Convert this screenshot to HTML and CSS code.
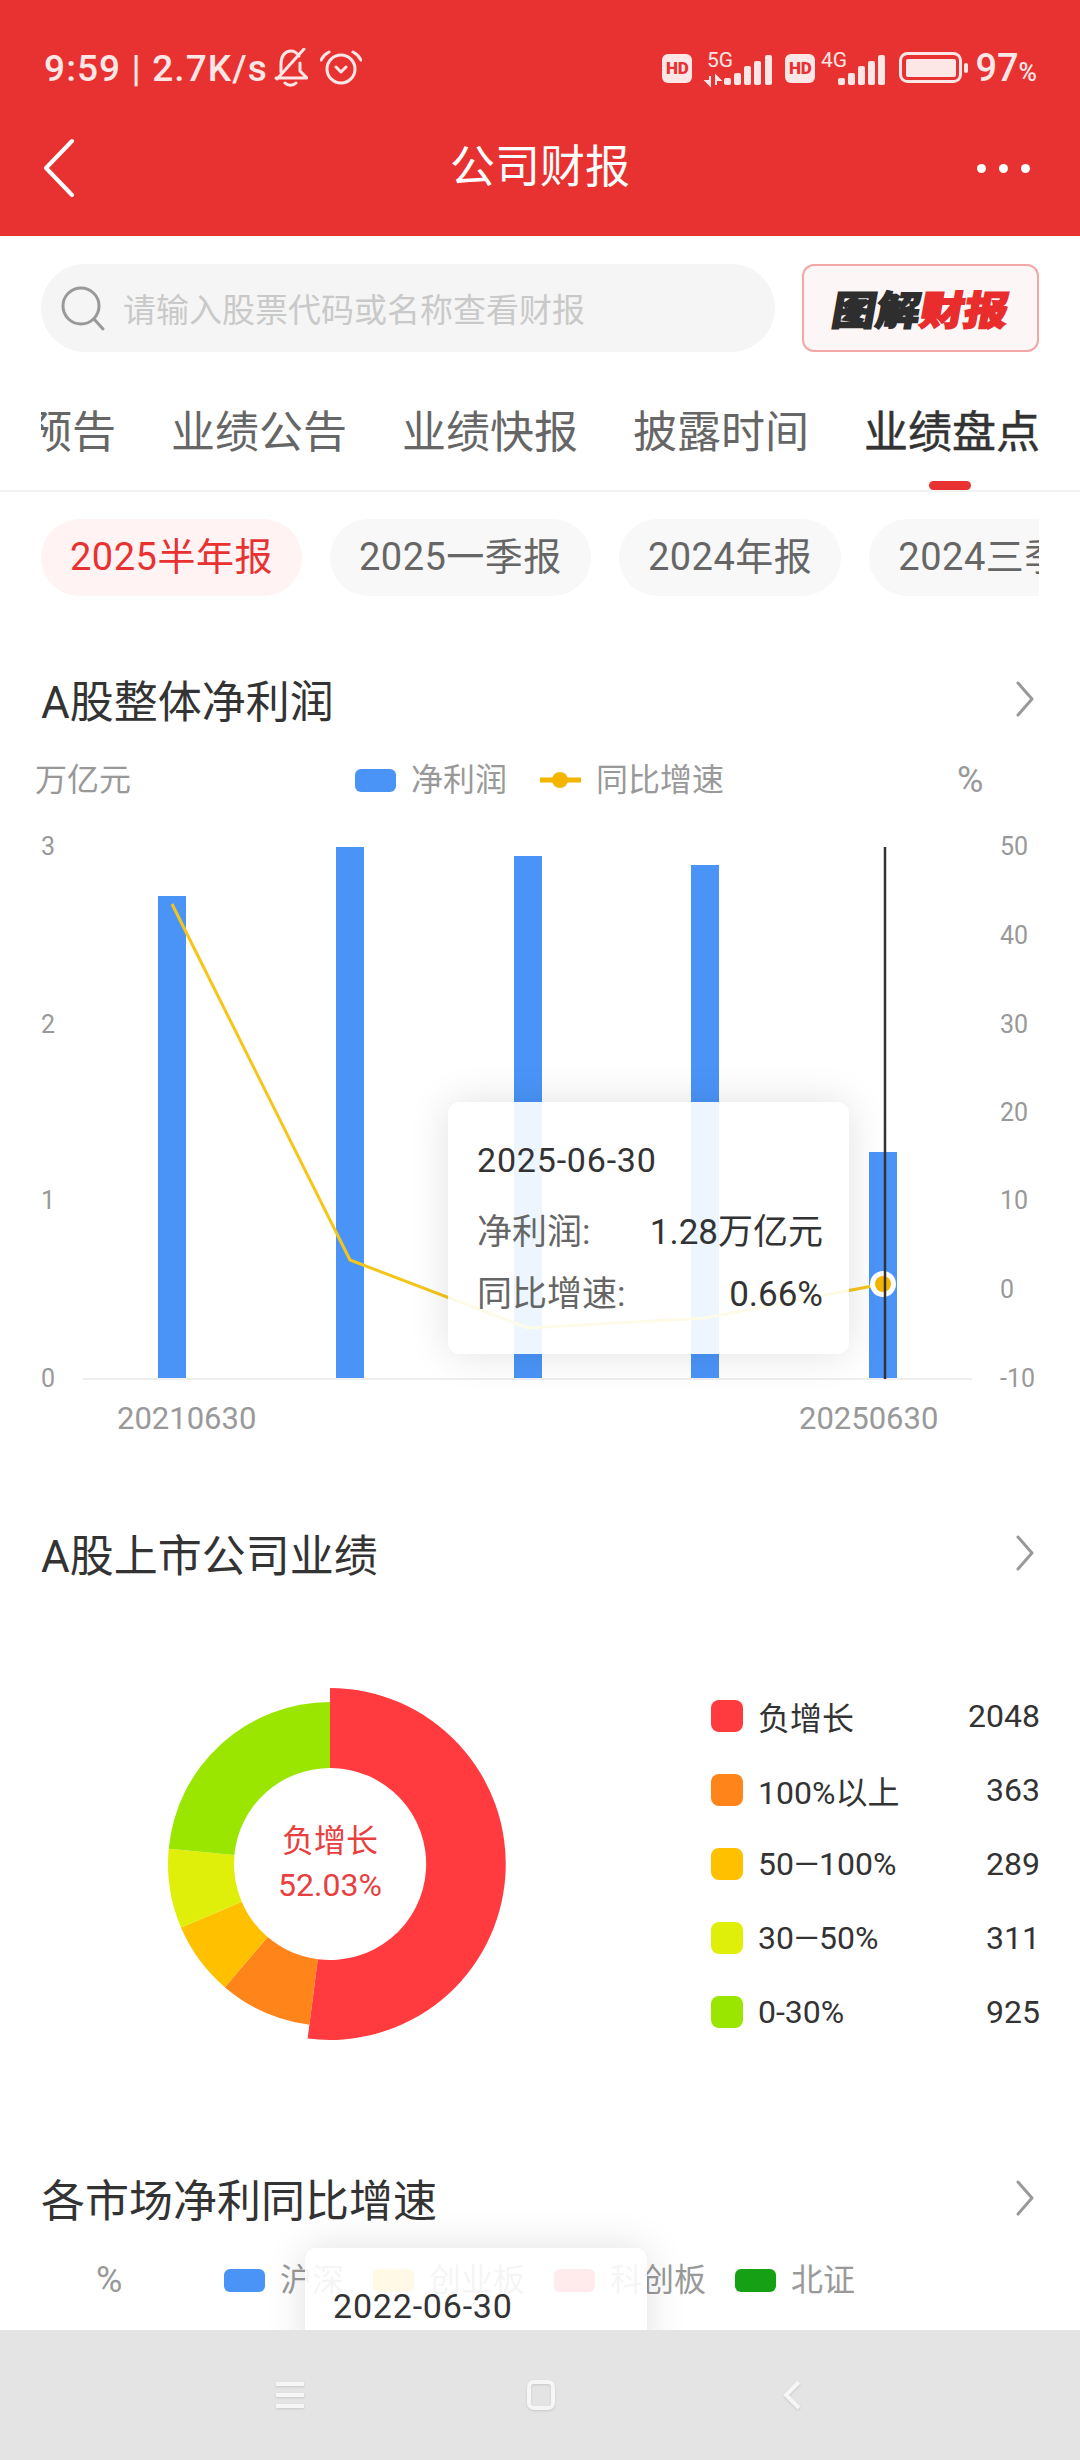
FILE: index.html
```html
<!DOCTYPE html>
<html lang="zh-CN">
<head>
<meta charset="UTF-8">
<meta name="viewport" content="width=device-width, initial-scale=1.0">
<title>公司财报</title>
<link rel="stylesheet" href="styles.css">
</head>
<body>
  <div class="header">
    <div class="status">
      <div class="status-left">
        <span class="clock">9:59 | 2.7K/s</span>
        <svg class="bell" viewBox="0 0 34 40" width="34" height="40">
          <path d="M7 24 V16 C7 8 11 3 17 3 C20 3 23 5 25 8 M26 15 V23 L33 30 H2 M30 1 L3 31 M11 35 C14 38 19 38 22 35"/>
        </svg>
        <svg class="alarm" viewBox="0 0 42 38" width="42" height="38">
          <circle cx="21" cy="20" r="14"/>
          <path d="M16 18 L21 23 L26 18 M1 11 C3 7 5 5 9 3 M33 3 C37 5 39 7 41 11"/>
        </svg>
      </div>
      <div class="status-right">
        <span class="hd">HD</span>
        <svg class="signal" viewBox="0 0 75 38" width="75" height="38">
          <text x="8" y="18">5G</text>
          <path class="arrow" d="M11 27 V35 M7 32 L11 36 L11 32 Z M17 36 V28 M17 27 L21 31 L17 31 Z"/>
          <rect x="25" y="29" width="7" height="7" rx="2"/>
          <rect x="35" y="24" width="7" height="12" rx="2"/>
          <rect x="45" y="17" width="7" height="19" rx="2"/>
          <rect x="55" y="12" width="7" height="24" rx="2"/>
          <rect x="66" y="6" width="7" height="30" rx="2"/>
        </svg>
        <span class="hd">HD</span>
        <svg class="signal signal-four" viewBox="0 0 65 38" width="65" height="38">
          <text x="1" y="18">4G</text>
          <rect x="18" y="29" width="7" height="7" rx="2"/>
          <rect x="28" y="24" width="7" height="12" rx="2"/>
          <rect x="38" y="17" width="7" height="19" rx="2"/>
          <rect x="48" y="12" width="7" height="24" rx="2"/>
          <rect x="58" y="6" width="7" height="30" rx="2"/>
        </svg>
        <svg class="battery" viewBox="0 0 70 32" width="70" height="32">
          <rect class="battery-case" x="1.5" y="1.5" width="60" height="28" rx="7"/>
          <rect x="7" y="7" width="50" height="18" rx="2"/>
          <rect x="65" y="11" width="4" height="10" rx="2"/>
        </svg>
        <span class="level">97<small>%</small></span>
      </div>
    </div>
    <div class="titlebar">
      <svg class="back" viewBox="0 0 32 60" width="32" height="60"><path d="M29 3 L3 30 L29 57"/></svg>
      <h1>公司财报</h1>
      <div class="more"><span></span><span></span><span></span></div>
    </div>
  </div>

  <div class="main">
    <div class="search-row">
      <div class="search">
        <svg viewBox="0 0 46 46" width="46" height="46"><circle cx="21" cy="21" r="18"/><path d="M34 34 L43 44"/></svg>
        <span>请输入股票代码或名称查看财报</span>
      </div>
      <div class="report-btn"><span class="logo">图解<em>财报</em></span></div>
    </div>

    <div class="tabs">
      <div class="tabs-clip">
        <div class="tabs-inner">
          <span>业绩预告</span>
          <span>业绩公告</span>
          <span>业绩快报</span>
          <span>披露时间</span>
          <span class="active">业绩盘点</span>
        </div>
      </div>
    </div>

    <div class="chips">
      <span class="chip active">2025半年报</span>
      <span class="chip">2025一季报</span>
      <span class="chip">2024年报</span>
      <span class="chip">2024三季报</span>
    </div>

    <div class="sec-head first">
      <h2>A股整体净利润</h2>
      <svg viewBox="0 0 20 36" width="20" height="36"><path d="M3 2 L17 18 L3 34"/></svg>
    </div>

    <div class="profit-chart">
      <svg class="chart" viewBox="0 750 1080 700" width="1080" height="700">
        <text class="unit" x="35" y="791">万亿元</text>
        <rect class="bar" x="355" y="769" width="41" height="23" rx="6"/>
        <text class="unit" x="411" y="791">净利润</text>
        <path class="line-key" d="M540 780 H581"/>
        <circle class="dot" cx="560" cy="780" r="8"/>
        <text class="unit" x="596" y="791">同比增速</text>
        <text class="unit-pct" x="957" y="792">%</text>

        <text class="tick" x="41" y="855">3</text>
        <text class="tick" x="41" y="1033">2</text>
        <text class="tick" x="41" y="1209">1</text>
        <text class="tick" x="41" y="1387">0</text>

        <text class="tick" x="1000" y="855">50</text>
        <text class="tick" x="1000" y="944">40</text>
        <text class="tick" x="1000" y="1033">30</text>
        <text class="tick" x="1000" y="1121">20</text>
        <text class="tick" x="1000" y="1209">10</text>
        <text class="tick" x="1000" y="1298">0</text>
        <text class="tick" x="1000" y="1387">-10</text>

        <path class="axis" d="M83 1379 H972"/>
        <rect class="bar" x="158" y="896" width="28" height="482"/>
        <rect class="bar" x="336" y="847" width="28" height="531"/>
        <rect class="bar" x="514" y="856" width="28" height="522"/>
        <rect class="bar" x="691" y="865" width="28" height="513"/>
        <rect class="bar" x="869" y="1152" width="28" height="226"/>
        <path class="growth" d="M172 904 L350 1260 L528 1328 L705 1318 L883 1284"/>
        <circle class="ring" cx="883" cy="1284" r="13"/>
        <circle class="dot" cx="883" cy="1284" r="8"/>
        <path class="cross" d="M885 847 V1379"/>

        <text class="xlabel" x="117" y="1429">20210630</text>
        <text class="xlabel" x="799" y="1429">20250630</text>
      </svg>
      <div class="tip profit-tip">
        <div class="tip-date">2025-06-30</div>
        <div class="tip-row"><span>净利润:</span><b>1.28万亿元</b></div>
        <div class="tip-row"><span>同比增速:</span><b>0.66%</b></div>
      </div>
    </div>

    <div class="sec-head second">
      <h2>A股上市公司业绩</h2>
      <svg viewBox="0 0 20 36" width="20" height="36"><path d="M3 2 L17 18 L3 34"/></svg>
    </div>

    <div class="donut-row">
      <svg class="donut" viewBox="0 0 400 400" width="400" height="400">
        <path fill="#ff3b3f" d="M200 24 A176 176 0 1 1 177.6 374.6 L187.8 295.2 A96 96 0 1 0 200 104 Z"/>
        <path fill="#ff851b" d="M179.4 360.7 A162 162 0 0 1 94.8 323.2 L137.7 273 A96 96 0 0 0 187.8 295.2 Z"/>
        <path fill="#ffc000" d="M94.8 323.2 A162 162 0 0 1 51 263.6 L111.7 237.7 A96 96 0 0 0 137.7 273 Z"/>
        <path fill="#e0ef0a" d="M51 263.6 A162 162 0 0 1 38.7 184.8 L104.4 191 A96 96 0 0 0 111.7 237.7 Z"/>
        <path fill="#9ae600" d="M38.7 184.8 A162 162 0 0 1 200 38 L200 104 A96 96 0 0 0 104.4 191 Z"/>
        <text x="200" y="188">负增长</text>
        <text x="200" y="232">52.03%</text>
      </svg>
      <div class="donut-legend">
        <div class="legend-row"><i class="c-red"></i><span>负增长</span><b>2048</b></div>
        <div class="legend-row"><i class="c-orange"></i><span>100%以上</span><b>363</b></div>
        <div class="legend-row"><i class="c-amber"></i><span>50—100%</span><b>289</b></div>
        <div class="legend-row"><i class="c-lime"></i><span>30—50%</span><b>311</b></div>
        <div class="legend-row"><i class="c-green"></i><span>0-30%</span><b>925</b></div>
      </div>
    </div>

    <div class="market">
      <div class="sec-head">
        <h2>各市场净利同比增速</h2>
        <svg viewBox="0 0 20 36" width="20" height="36"><path d="M3 2 L17 18 L3 34"/></svg>
      </div>
      <div class="market-legend">
        <span class="market-unit">%</span>
        <span class="key"><i class="m-blue"></i>沪深</span>
        <span class="key"><i class="c-amber"></i>创业板</span>
        <span class="key"><i class="c-red"></i>科创板</span>
        <span class="key"><i class="m-green"></i>北证</span>
      </div>
      <div class="tip market-tip">
        <div class="tip-date">2022-06-30</div>
      </div>
    </div>
  </div>

  <div class="navbar">
    <svg viewBox="0 0 28 26" width="28" height="26"><path d="M0 2 H28 M0 13 H28 M0 24 H28"/></svg>
    <svg viewBox="0 0 28 30" width="28" height="30"><rect x="2" y="2" width="24" height="26" rx="5"/></svg>
    <svg viewBox="0 0 18 30" width="18" height="30"><path d="M16 2 L3 15 L16 28"/></svg>
  </div>
</body>
</html>
```

FILE: styles.css
```css
* {
  box-sizing: border-box;
}

body {
  margin: 0;
  width: 1080px;
  height: 2460px;
  display: flex;
  flex-direction: column;
  overflow: hidden;
  background-color: #fff;
  font-family: Roboto, "Noto Sans CJK SC", sans-serif;
  color: #333;
}

h1, h2 {
  margin: 0;
  font-weight: 400;
}

/* Red header */
.header {
  height: 236px;
  background-color: #e83232;
  color: #fff;
}

.status {
  height: 104px;
  padding: 32px 43px 0 44px;
  display: flex;
  justify-content: space-between;
  color: #fde6e6;
}

.status-left,
.status-right {
  height: 72px;
  display: flex;
  align-items: center;
}

.clock {
  font-size: 37px;
  font-weight: 500;
  letter-spacing: 1.1px;
  white-space: nowrap;
}

.bell,
.alarm {
  fill: none;
  stroke: #fde6e6;
  stroke-width: 3;
  stroke-linecap: round;
  stroke-linejoin: round;
}

.bell {
  margin-left: 6px;
}

.alarm {
  margin-left: 12px;
}

.hd {
  width: 30px;
  height: 29px;
  border-radius: 6px;
  background-color: #fde6e6;
  color: #e83232;
  font-size: 17px;
  font-weight: 900;
  line-height: 29px;
  text-align: center;
}

.signal {
  margin-left: 7px;
  fill: #fde6e6;
  overflow: visible;
}

.signal text {
  font-size: 21px;
}

.signal-four {
  margin-left: 5px;
}

.signal + .hd {
  margin-left: 11px;
}

.arrow {
  fill: #fde6e6;
  stroke: #fde6e6;
  stroke-width: 2;
}

.battery {
  margin-left: 14px;
  fill: #fde6e6;
}

.battery-case {
  fill: none;
  stroke: #fde6e6;
  stroke-width: 3;
}

.level {
  margin-left: 6px;
  font-size: 38px;
  font-weight: 500;
}

.level small {
  font-size: 25px;
}

.titlebar {
  height: 132px;
  padding: 0 50px 4px 43px;
  display: flex;
  align-items: center;
  justify-content: space-between;
  position: relative;
}

.titlebar h1 {
  position: absolute;
  left: 0;
  right: 0;
  top: 0;
  font-size: 45px;
  line-height: 128px;
  text-align: center;
}

.back {
  fill: none;
  stroke: #fff;
  stroke-width: 4;
  stroke-linecap: round;
  stroke-linejoin: round;
}

.more {
  display: flex;
  gap: 13px;
}

.more span {
  width: 9px;
  height: 9px;
  border-radius: 50%;
  background-color: #fff;
}

/* Page body */
.main {
  flex: 1;
  overflow: hidden;
}

.search-row {
  padding: 28px 41px 0;
  display: flex;
  justify-content: space-between;
}

.search {
  width: 734px;
  height: 88px;
  padding-left: 19px;
  border-radius: 44px;
  background-color: #f5f5f5;
  display: flex;
  align-items: center;
  gap: 17px;
  color: #c9c9c9;
  font-size: 33px;
}

.search svg {
  flex: none;
  fill: none;
  stroke: #999;
  stroke-width: 3;
  stroke-linecap: round;
}

.report-btn {
  width: 237px;
  height: 88px;
  border: 2px solid #f2a7a7;
  border-radius: 12px;
  background-color: #fdf6f6;
  display: flex;
  align-items: center;
  justify-content: center;
}

.logo {
  font-size: 40px;
  font-weight: 900;
  color: #2e2e2e;
  transform: skewX(-10deg) scaleX(1.1);
  -webkit-text-stroke: 1.5px currentColor;
}

.logo em {
  font-style: normal;
  color: #e92c2c;
}

.tabs {
  height: 140px;
  border-bottom: 2px solid #f2f2f2;
  padding: 0 41px;
}

.tabs-clip {
  height: 138px;
  overflow: hidden;
}

.tabs-inner {
  margin-left: -101px;
  padding-top: 50px;
  display: flex;
  gap: 55px;
  color: #666;
  font-size: 44px;
  line-height: 62px;
  white-space: nowrap;
}

.tabs-inner .active {
  color: #333;
  position: relative;
  -webkit-text-stroke: 0.5px #333;
}

.tabs-inner .active::after {
  content: "";
  position: absolute;
  left: 65px;
  top: 79px;
  width: 42px;
  height: 9px;
  border-radius: 5px;
  background-color: #e83232;
}

.chips {
  margin: 27px 41px 0;
  display: flex;
  gap: 28px;
  overflow: hidden;
}

.chip {
  flex: none;
  height: 77px;
  padding: 0 29px;
  border-radius: 39px;
  background-color: #f8f8f8;
  color: #666;
  font-size: 38px;
  letter-spacing: 0.5px;
  line-height: 77px;
  white-space: nowrap;
}

.chip.active {
  background-color: #fff3f3;
  color: #e83232;
}

.sec-head {
  height: 60px;
  padding: 0 45px 0 41px;
  display: flex;
  align-items: center;
  justify-content: space-between;
}

.sec-head h2 {
  font-size: 44px;
}

.sec-head svg {
  fill: none;
  stroke: #999;
  stroke-width: 3;
  stroke-linecap: round;
  stroke-linejoin: round;
}

.sec-head.first {
  margin-top: 73px;
}

.sec-head.second {
  margin-top: 73px;
}

/* Net profit chart */
.profit-chart {
  height: 700px;
  margin-top: 21px;
  position: relative;
}

.chart {
  display: block;
}

.unit {
  fill: #999;
  font-size: 32px;
}

.unit-pct {
  fill: #999;
  font-size: 36px;
}

.tick {
  fill: #999;
  font-size: 25px;
}

.xlabel {
  fill: #999;
  font-size: 31px;
}

.bar {
  fill: #4a94f8;
}

.axis {
  stroke: #eee;
  stroke-width: 2;
}

.cross {
  stroke: #333;
  stroke-width: 2.5;
}

.growth {
  fill: none;
  stroke: #f5c518;
  stroke-width: 3;
}

.line-key {
  stroke: #f4b400;
  stroke-width: 5;
}

.dot {
  fill: #f4b400;
}

.ring {
  fill: #fff;
}

.tip {
  position: absolute;
  padding: 35px 26px 0 29px;
  border-radius: 12px;
  background-color: rgba(255, 255, 255, 0.9);
  box-shadow: 0 0 40px rgba(0, 0, 0, 0.12);
}

.tip-date {
  font-size: 34px;
  letter-spacing: 0.8px;
  line-height: 46px;
}

.tip-row {
  margin-top: 14px;
  display: flex;
  justify-content: space-between;
  font-size: 35px;
  line-height: 48px;
  color: #666;
}

.tip-date + .tip-row {
  margin-top: 26px;
}

.tip-row b {
  font-weight: 400;
  color: #333;
}

.profit-tip {
  left: 448px;
  top: 352px;
  width: 401px;
  height: 252px;
}

/* Donut */
.donut-row {
  height: 400px;
  margin-top: 81px;
  padding: 0 40px 0 130px;
  display: flex;
  align-items: center;
  justify-content: space-between;
}

.donut text {
  fill: #e84040;
  font-size: 32px;
  text-anchor: middle;
}

.donut-legend {
  width: 329px;
  display: flex;
  flex-direction: column;
  gap: 32.2px;
}

.legend-row {
  height: 42px;
  display: flex;
  align-items: center;
  font-size: 32px;
}

.legend-row i {
  width: 32px;
  height: 32px;
  margin-right: 15px;
  border-radius: 8px;
}

.legend-row b {
  margin-left: auto;
  font-weight: 400;
}

.c-red { background-color: #ff3b3f; }
.c-orange { background-color: #ff851b; }
.c-amber { background-color: #ffc000; }
.c-lime { background-color: #e0ef0a; }
.c-green { background-color: #9ae600; }
.m-blue { background-color: #4a94f8; }
.m-green { background-color: #16a016; }

/* Market section, cut off by the nav bar */
.market {
  margin-top: 104px;
  position: relative;
}

.market-legend {
  margin-top: 28px;
  padding-left: 96px;
  display: flex;
  align-items: center;
  gap: 29px;
  color: #999;
  font-size: 32px;
  line-height: 48px;
}

.market-unit {
  width: 99px;
  font-size: 36px;
}

.key {
  display: flex;
  align-items: center;
  gap: 15px;
}

.key i {
  width: 41px;
  height: 23px;
  border-radius: 6px;
}

.market-tip {
  left: 305px;
  top: 80px;
  width: 342px;
  height: 255px;
  padding-left: 28px;
}

/* System nav */
.navbar {
  height: 130px;
  padding-left: 2px;
  background-color: #e4e4e4;
  display: grid;
  grid-template-columns: repeat(3, 251px);
  justify-content: center;
  justify-items: center;
  align-items: center;
}

.navbar svg {
  fill: none;
  stroke: #f6f6f6;
  stroke-width: 4;
  filter: drop-shadow(0 1px 1px rgba(0, 0, 0, 0.12));
}
```
